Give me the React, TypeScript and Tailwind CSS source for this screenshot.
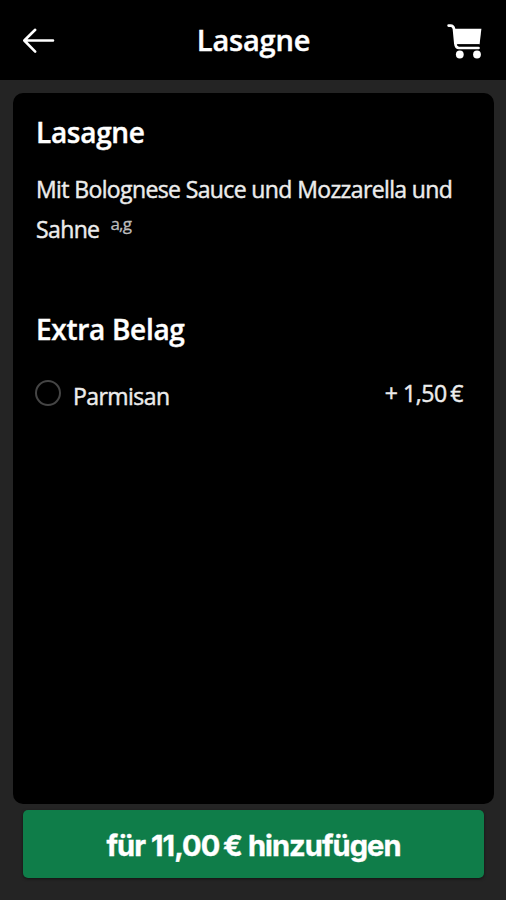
export default function App() {
  return (
    <div className="flex h-[900px] w-[506px] flex-col overflow-hidden bg-[#242424] font-['Open_Sans',sans-serif] text-white">
      <header className="flex h-20 shrink-0 items-center justify-between bg-black pr-[23px] pl-[22px]">
        <button aria-label="Zurück" className="flex w-9 items-center">
          <svg width="34" height="28" viewBox="0 0 34 28" fill="none" stroke="white" strokeWidth="2.6" strokeLinecap="round" strokeLinejoin="round">
            <path d="M31 14.5H3M13.2 3.8L2.3 14.5L13.2 25.6" />
          </svg>
        </button>
        <h1 className="ml-[2px] text-[29px] leading-[40px] font-semibold tracking-[-0.2px] whitespace-nowrap [-webkit-text-stroke:0.4px_white]"><span>Lasagne</span></h1>
        <button aria-label="Warenkorb" className="flex w-9 items-center">
          <svg width="36" height="38" viewBox="0 0 36 38" fill="white">
            <path d="M7 7.7H34.4L32.6 23.2H9.2Z" />
            <path d="M1.6 4.6H3.6C5.8 4.6 6.6 5.6 7 8L8.4 22.5C8.7 25.6 9.8 27 12 27H31.5" fill="none" stroke="white" strokeWidth="2.7" strokeLinecap="round" />
            <path d="M10.5 23.4H32V24.6H10.5Z" fill="black" />
            <circle cx="12.8" cy="33.5" r="3.9" />
            <circle cx="30" cy="33.5" r="3.9" />
          </svg>
        </button>
      </header>
      <main className="mx-[13px] mt-[13px] flex h-[711px] w-[481px] shrink-0 flex-col rounded-[10px] bg-black pr-[30px] pl-[23px]">
        <h2 className="mt-[19px] text-[28px] leading-[40px] font-semibold tracking-[-0.3px] [-webkit-text-stroke:0.4px_white]"><span>Lasagne</span></h2>
        <p className="mt-[17px] text-[23px] leading-[40px] tracking-[-0.62px] whitespace-nowrap text-[#ececec] [-webkit-text-stroke:0.45px_#ececec]">
          <span>Mit Bolognese Sauce und Mozzarella und</span>
          <br />
          <span>Sahne</span>
          <span className="relative -top-[8px] ml-[11px] text-[17px] leading-none tracking-[-0.8px] text-[#bdbdbd] [-webkit-text-stroke:0.3px_#bdbdbd]">a,g</span>
        </p>
        <h2 className="mt-[60px] text-[28px] leading-[40px] font-semibold tracking-[-0.3px] [-webkit-text-stroke:0.4px_white]"><span>Extra Belag</span></h2>
        <label className="mt-[24px] flex h-10 items-center">
          <span className="mt-[-1px] ml-[-1px] size-[26px] rounded-full border-2 border-[#454545]" />
          <span className="mt-[6px] ml-[12px] text-[23px] leading-[40px] tracking-[-0.55px] text-[#ececec] [-webkit-text-stroke:0.45px_#ececec]">Parmisan</span>
          <span className="mr-px ml-auto text-[23px] leading-[40px] tracking-[-0.4px] whitespace-nowrap text-[#ececec] [-webkit-text-stroke:0.45px_#ececec]">+ 1,50&#8201;€</span>
        </label>
      </main>
      <button className="mt-[6px] ml-[23px] flex h-[68px] w-[461px] shrink-0 items-center justify-center rounded-[5px] bg-[#0f7d49] pt-[4px] font-['Inter',sans-serif] text-[29px] leading-[40px] font-bold tracking-[-0.92px] whitespace-nowrap shadow-[0_1px_3px_rgba(0,0,0,0.5)] [-webkit-text-stroke:0.4px_white]">
        <span>für 11,00&#8201;€ hinzufügen</span>
      </button>
    </div>
  );
}
